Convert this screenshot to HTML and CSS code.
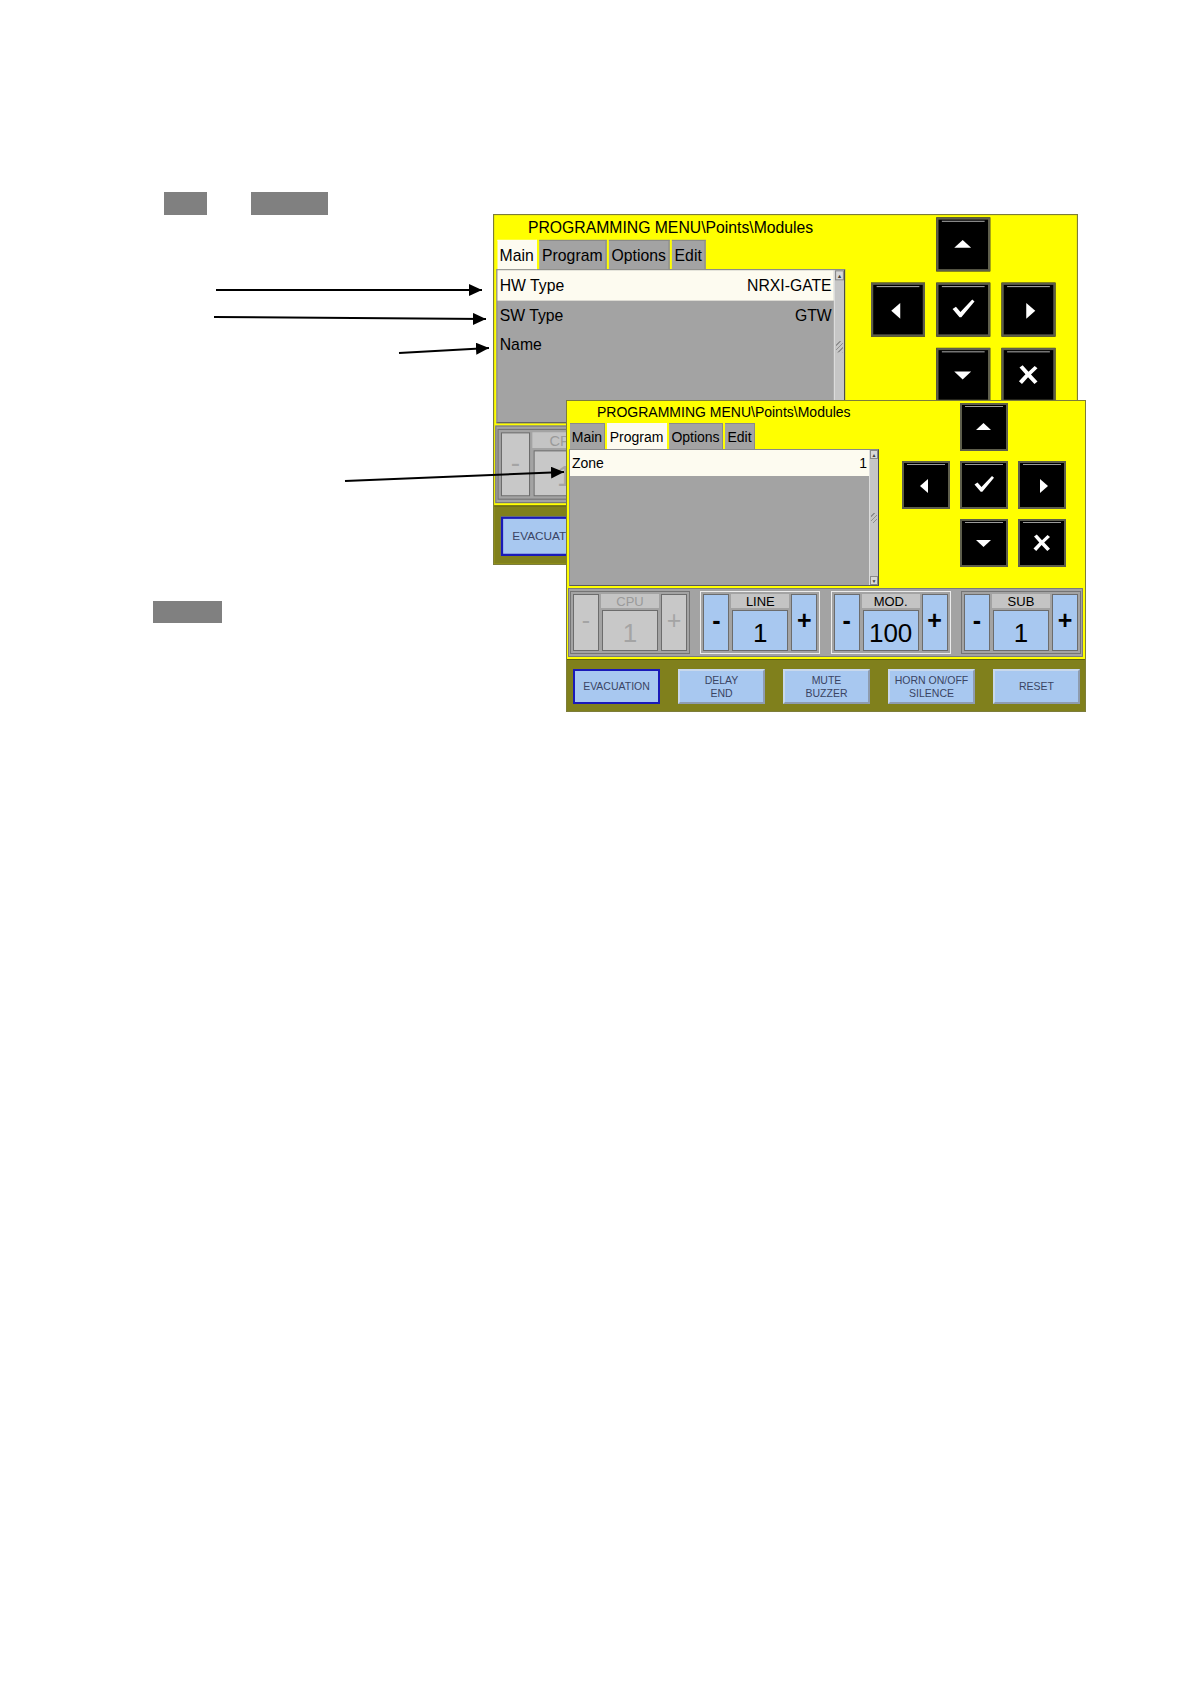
FILE: index.html
```html
<!doctype html>
<html lang="en">
<head>
	<meta charset="UTF-8">
	<title>Programming menu - Points/Modules</title>
	<link rel="stylesheet" href="styles.css">
</head>
<body>
	<div class="sheet">

		<span class="redact redact-a"></span>
		<span class="redact redact-b"></span>
		<span class="redact redact-c"></span>

		<!-- back screen: Main tab -->
		<div class="panel panel-back">
			<div class="screen">
				<div class="upper">
					<div class="menu">
						<div class="title">PROGRAMMING MENU\Points\Modules</div>
						<div class="tabs">
							<span class="tab tab-main active">Main</span>
							<span class="tab tab-program">Program</span>
							<span class="tab tab-options">Options</span>
							<span class="tab tab-edit">Edit</span>
						</div>
						<div class="list">
							<div class="rows">
								<div class="row selected"><span>HW Type</span><span>NRXI-GATE</span></div>
								<div class="row"><span>SW Type</span><span>GTW</span></div>
								<div class="row"><span>Name</span><span></span></div>
							</div>
							<div class="scroll">
								<span class="sb-btn">&#9650;</span>
								<span class="sb-grip"></span>
								<span class="sb-btn">&#9660;</span>
							</div>
						</div>
					</div>
					<div class="nav">
						<span class="key key-up"><svg viewBox="0 0 44 44"><polygon points="14,25 29,25 21.5,18"/></svg></span>
						<span class="key key-left"><svg viewBox="0 0 44 44"><polygon points="24,16 24,30 16,23"/></svg></span>
						<span class="key key-ok"><svg viewBox="0 0 44 44"><path d="M12.5 21.5 L15.5 19.5 L19.5 24 L30 13 L32 14.8 L20.3 28.8 L18.7 28.8 Z"/></svg></span>
						<span class="key key-right"><svg viewBox="0 0 44 44"><polygon points="20,16 20,30 28,23"/></svg></span>
						<span class="key key-down"><svg viewBox="0 0 44 44"><polygon points="14,19 29,19 21.5,26"/></svg></span>
						<span class="key key-cancel"><svg viewBox="0 0 44 44"><path d="M14 15.5 L16.8 13.5 L22 19.3 L27.5 14 L30 16 L24.2 21.6 L30 27.8 L27.3 30 L21.6 24 L16.2 30 L13.5 27.6 L19.3 21.5 Z"/></svg></span>
					</div>
				</div>
				<div class="controls">
					<div class="group disabled">
						<span class="step">-</span>
						<div class="field"><span class="label">CPU</span><span class="value">1</span></div>
						<span class="step">+</span>
					</div>
					<div class="group lit">
						<span class="step">-</span>
						<div class="field"><span class="label">LINE</span><span class="value">1</span></div>
						<span class="step">+</span>
					</div>
					<div class="group lit">
						<span class="step">-</span>
						<div class="field"><span class="label">MOD.</span><span class="value">100</span></div>
						<span class="step">+</span>
					</div>
					<div class="group">
						<span class="step">-</span>
						<div class="field"><span class="label">SUB</span><span class="value">1</span></div>
						<span class="step">+</span>
					</div>
				</div>
			</div>
			<div class="bar">
				<span class="cmd active">EVACUATION</span>
				<span class="cmd">DELAY<br>END</span>
				<span class="cmd">MUTE<br>BUZZER</span>
				<span class="cmd">HORN ON/OFF<br>SILENCE</span>
				<span class="cmd">RESET</span>
			</div>
		</div>

		<!-- front screen: Program tab -->
		<div class="panel panel-front">
			<div class="screen">
				<div class="upper">
					<div class="menu">
						<div class="title">PROGRAMMING MENU\Points\Modules</div>
						<div class="tabs">
							<span class="tab tab-main">Main</span>
							<span class="tab tab-program active">Program</span>
							<span class="tab tab-options">Options</span>
							<span class="tab tab-edit">Edit</span>
						</div>
						<div class="list">
							<div class="rows">
								<div class="row selected"><span>Zone</span><span>1</span></div>
							</div>
							<div class="scroll">
								<span class="sb-btn">&#9650;</span>
								<span class="sb-grip"></span>
								<span class="sb-btn">&#9660;</span>
							</div>
						</div>
					</div>
					<div class="nav">
						<span class="key key-up"><svg viewBox="0 0 44 44"><polygon points="14,25 29,25 21.5,18"/></svg></span>
						<span class="key key-left"><svg viewBox="0 0 44 44"><polygon points="24,16 24,30 16,23"/></svg></span>
						<span class="key key-ok"><svg viewBox="0 0 44 44"><path d="M12.5 21.5 L15.5 19.5 L19.5 24 L30 13 L32 14.8 L20.3 28.8 L18.7 28.8 Z"/></svg></span>
						<span class="key key-right"><svg viewBox="0 0 44 44"><polygon points="20,16 20,30 28,23"/></svg></span>
						<span class="key key-down"><svg viewBox="0 0 44 44"><polygon points="14,19 29,19 21.5,26"/></svg></span>
						<span class="key key-cancel"><svg viewBox="0 0 44 44"><path d="M14 15.5 L16.8 13.5 L22 19.3 L27.5 14 L30 16 L24.2 21.6 L30 27.8 L27.3 30 L21.6 24 L16.2 30 L13.5 27.6 L19.3 21.5 Z"/></svg></span>
					</div>
				</div>
				<div class="controls">
					<div class="group disabled">
						<span class="step">-</span>
						<div class="field"><span class="label">CPU</span><span class="value">1</span></div>
						<span class="step">+</span>
					</div>
					<div class="group lit">
						<span class="step">-</span>
						<div class="field"><span class="label">LINE</span><span class="value">1</span></div>
						<span class="step">+</span>
					</div>
					<div class="group lit">
						<span class="step">-</span>
						<div class="field"><span class="label">MOD.</span><span class="value">100</span></div>
						<span class="step">+</span>
					</div>
					<div class="group">
						<span class="step">-</span>
						<div class="field"><span class="label">SUB</span><span class="value">1</span></div>
						<span class="step">+</span>
					</div>
				</div>
			</div>
			<div class="bar">
				<span class="cmd active">EVACUATION</span>
				<span class="cmd">DELAY<br>END</span>
				<span class="cmd">MUTE<br>BUZZER</span>
				<span class="cmd">HORN ON/OFF<br>SILENCE</span>
				<span class="cmd">RESET</span>
			</div>
		</div>

		<!-- callout arrows -->
		<svg class="arrows" width="1190" height="700" viewBox="0 0 1190 700">
			<defs>
				<marker id="head" markerWidth="13" markerHeight="12" refX="13" refY="6" orient="auto" markerUnits="userSpaceOnUse">
					<path d="M0,0 L13,6 L0,12 Z"/>
				</marker>
			</defs>
			<line x1="216" y1="290" x2="482" y2="290"/>
			<line x1="214" y1="317" x2="486" y2="319"/>
			<line x1="399" y1="353" x2="489" y2="348"/>
			<line x1="345" y1="481" x2="564" y2="472"/>
		</svg>

	</div>
</body>
</html>
```

FILE: styles.css
```css
*{
	padding: 0;
	margin: 0;
	box-sizing: border-box;
}
body{
	background: #FFFFFF;
	font-family: "Liberation Sans", Arial, sans-serif;
	color: #000000;
}

.sheet{
	position: relative;
	width: 1190px;
	height: 1684px;
}

/* blanked-out labels */
.redact{
	position: absolute;
	height: 23px;
	background: #808080;
}
.redact-a{
	left: 164px;
	top: 192px;
	width: 43px;
}
.redact-b{
	left: 251px;
	top: 192px;
	width: 77px;
}
.redact-c{
	left: 153px;
	top: 601px;
	width: 69px;
	height: 22px;
}

/* touch panel */
.panel{
	position: absolute;
	width: 520px;
	height: 312px;
	border: 1px solid #7d7d3a;
	background: #FFFF00;
	display: flex;
	flex-direction: column;
}
.panel-back{
	left: 493px;
	top: 214px;
	transform: scale(1.125);
	transform-origin: 0 0;
}
.panel-front{
	left: 566px;
	top: 400px;
}

.screen{
	height: 258px;
	padding-left: 2px;
}
.upper{
	display: flex;
}
.menu{
	width: 310px;
}
.title{
	height: 22px;
	line-height: 22px;
	padding-left: 28px;
	font-size: 14px;
	white-space: nowrap;
}

.tabs{
	display: flex;
	gap: 2px;
	height: 26px;
	margin-left: 1px;
}
.tab{
	height: 26px;
	line-height: 26px;
	font-size: 14px;
	text-align: center;
	background: #A3A3A3;
	border-top: 1px solid #8a8a8a;
	border-right: 1px solid #8a8a8a;
}
.tab.active{
	background: #FDFBF0;
	border-color: #FDFBF0;
}
.tab-main{ width: 35px; }
.tab-program{ width: 60px; }
.tab-options{ width: 54px; }
.tab-edit{ width: 30px; }

.list{
	display: flex;
	height: 137px;
	background: #A3A3A3;
	border: 1px solid #8a8a8a;
	border-right-color: #4d4d4d;
	border-bottom-color: #5a5a5a;
}
.rows{
	flex: 1;
}
.row{
	display: flex;
	justify-content: space-between;
	height: 26px;
	line-height: 26px;
	padding: 0 2px 0 2px;
	font-size: 14px;
	white-space: nowrap;
}
.panel-back .row:first-child{
	height: 27px;
	line-height: 27px;
}
.row.selected{
	background: #FDFBF0;
}
.scroll{
	width: 9px;
	display: flex;
	flex-direction: column;
	justify-content: space-between;
	align-items: center;
	background: #C6C6C6;
	border-left: 1px solid #dcdcdc;
}
.sb-btn{
	width: 8px;
	height: 9px;
	font-size: 5px;
	line-height: 9px;
	text-align: center;
	color: #404040;
	background: #D8D8D8;
	border: 1px solid #8a8a8a;
}
.sb-grip{
	width: 6px;
	height: 10px;
	background: repeating-linear-gradient(135deg, #C6C6C6 0 2px, #8e8e8e 2px 3px);
}

/* arrow keys */
.nav{
	display: grid;
	grid-template-columns: repeat(3, 48px);
	grid-template-rows: repeat(3, 48px);
	gap: 10px;
	margin: 2px 0 0 23px;
}
.key{
	position: relative;
	width: 48px;
	height: 48px;
	background: #000000;
	border: 2px solid #5e5e4c;
}
.key:before{
	content: "";
	position: absolute;
	top: 1px;
	left: 3px;
	right: 3px;
	height: 1px;
	background: #9a9a9a;
}
.key svg{
	display: block;
	width: 44px;
	height: 44px;
	fill: #FFFFFF;
}
.key-up{ grid-column: 2; grid-row: 1; }
.key-left{ grid-column: 1; grid-row: 2; }
.key-ok{ grid-column: 2; grid-row: 2; }
.key-right{ grid-column: 3; grid-row: 2; }
.key-down{ grid-column: 2; grid-row: 3; }
.key-cancel{ grid-column: 3; grid-row: 3; }

/* address steppers */
.controls{
	display: flex;
	justify-content: space-between;
	width: 515px;
	height: 69px;
	margin: 2px 0 0 -1px;
	padding: 2px 1px;
	background: #A3A3A3;
	border: 1px solid #7a7a7a;
}
.group{
	display: flex;
	gap: 2px;
	width: 120px;
	height: 63px;
	padding: 2px;
	border: 1px solid #747474;
}
.group.lit{
	border-color: #ececec;
}
.step{
	width: 26px;
	display: flex;
	align-items: center;
	justify-content: center;
	padding-bottom: 4px;
	font-size: 25px;
	font-weight: bold;
	background: #A8C8F0;
	border: 1px solid #6c6c6c;
}
.field{
	width: 58px;
	display: flex;
	flex-direction: column;
	gap: 2px;
}
.label{
	height: 14px;
	line-height: 15px;
	font-size: 13px;
	text-align: center;
	background: #C4C4C4;
}
.value{
	flex: 1;
	margin: 0 1px;
	padding-top: 5px;
	display: flex;
	align-items: center;
	justify-content: center;
	font-size: 26px;
	background: #A8C8F0;
	border: 1px solid #6c6c6c;
}
.group.disabled .step,
.group.disabled .value{
	background: #C8C8C8;
	color: #A4A4A4;
	font-weight: normal;
}
.group.disabled .label{
	color: #9a9a9a;
}

/* command strip */
.bar{
	flex: 1;
	display: flex;
	gap: 18px;
	padding: 9px 0 0 6px;
	background: #80801C;
	border-top: 1px solid #5f5f14;
}
.cmd{
	width: 87px;
	height: 35px;
	display: flex;
	align-items: center;
	justify-content: center;
	text-align: center;
	font-size: 10.5px;
	line-height: 13px;
	color: #3a4463;
	background: #A8C8F0;
	border: 2px solid #8e9cb0;
	border-top-color: #c8d8ec;
	border-left-color: #c8d8ec;
}
.cmd.active{
	border: 2px solid #1a1ab8;
}

.arrows{
	position: absolute;
	left: 0;
	top: 0;
	pointer-events: none;
}
.arrows line{
	stroke: #000000;
	stroke-width: 2;
	marker-end: url(#head);
}
```
